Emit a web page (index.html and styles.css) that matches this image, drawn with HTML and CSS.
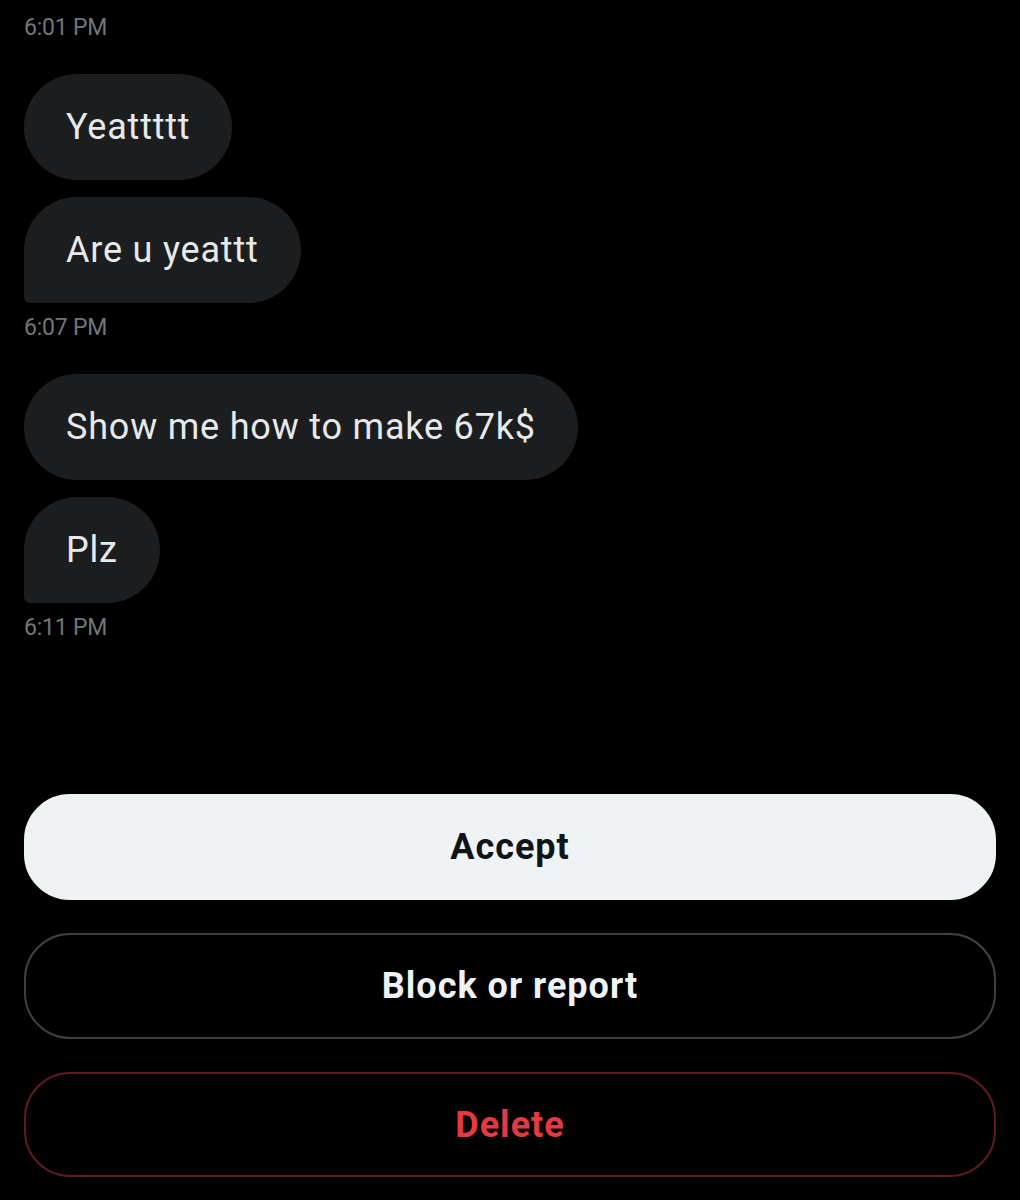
FILE: index.html
```html
<!DOCTYPE html>
<html lang="en">
<head>
    <meta charset="UTF-8">
    <meta name="viewport" content="width=device-width, initial-scale=1.0">
    <title>Message request</title>
    <link rel="stylesheet" href="styles.css">
</head>
<body>
<div class="chat">
    <div class="group">
        <div class="time">6:01 PM</div>
    </div>

    <div class="group">
        <div class="bubble">Yeattttt</div>
        <div class="bubble last">Are u yeattt</div>
        <div class="time">6:07 PM</div>
    </div>

    <div class="group">
        <div class="bubble">Show me how to make 67k$</div>
        <div class="bubble last">Plz</div>
        <div class="time">6:11 PM</div>
    </div>
</div>

<div class="actions">
    <button class="btn accept">Accept</button>
    <button class="btn block">Block or report</button>
    <button class="btn delete">Delete</button>
</div>
</body>
</html>
```

FILE: styles.css
```css
body {
    margin: 0;
    padding: 0;
    background-color: #000;
    font-family: Roboto, "Liberation Sans", sans-serif;
    width: 1020px;
    height: 1200px;
    overflow: hidden;
}

.chat {
    padding: 14px 24px 0;
    display: flex;
    flex-direction: column;
    gap: 33px;
}

.group {
    display: flex;
    flex-direction: column;
    align-items: flex-start;
    gap: 17px;
}

.time {
    color: #71767b;
    font-size: 23px;
    line-height: 27px;
    letter-spacing: -0.2px;
}

.bubble + .time {
    margin-top: -6px;
}

.bubble {
    background-color: #1c1d1f;
    color: #e7e9ea;
    font-size: 36px;
    line-height: 40px;
    letter-spacing: 0.8px;
    padding: 33px 42px;
    border-radius: 53px;
}

.bubble.last {
    border-bottom-left-radius: 6px;
}

.actions {
    position: absolute;
    left: 24px;
    right: 24px;
    top: 794px;
    display: flex;
    flex-direction: column;
    gap: 33px;
}

.btn {
    display: block;
    width: 100%;
    height: 106px;
    border-radius: 46px;
    font-family: Roboto, "Liberation Sans", sans-serif;
    font-size: 36px;
    font-weight: bold;
    letter-spacing: 1px;
    background-color: #000;
    border: 2px solid #3d4044;
    color: #eff3f4;
    cursor: pointer;
}

.btn.accept {
    background-color: #eff3f4;
    border-color: #eff3f4;
    color: #0f1419;
}

.btn.delete {
    border-color: #5f1a1f;
    color: #e23a40;
    height: 105px;
}
```
